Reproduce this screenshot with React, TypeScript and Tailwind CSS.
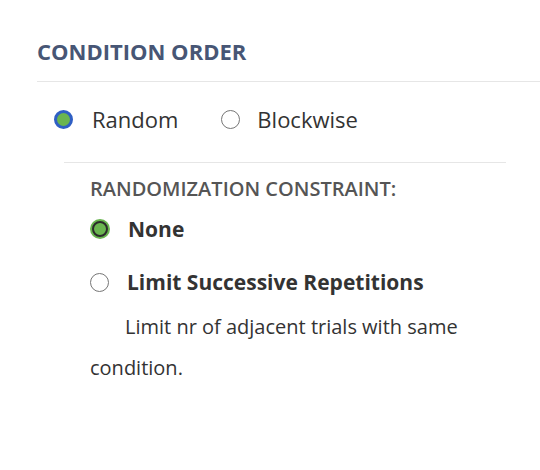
import { useState } from "react";

type Order = "random" | "blockwise";
type Constraint = "none" | "limit";

function Dot({ checked, variant }: { checked: boolean; variant: "blue" | "green" }) {
  if (!checked) {
    return <span className="block h-[19px] w-[19px] shrink-0 rounded-full border-[1.5px] border-[#767676] bg-white" />;
  }
  if (variant === "blue") {
    return <span className="block h-[19px] w-[19px] shrink-0 rounded-full border-[3px] border-[#2f5fc4] bg-[#6ab550]" />;
  }
  return (
    <span className="flex h-[20px] w-[20px] shrink-0 items-center justify-center rounded-full bg-[#6ab550]">
      <span className="block h-[16px] w-[16px] rounded-full border-[2.5px] border-[#2b2b2b] bg-[#6ab550]" />
    </span>
  );
}

export default function App() {
  const [order, setOrder] = useState<Order>("random");
  const [constraint, setConstraint] = useState<Constraint>("none");

  return (
    <div className="min-h-[470px] bg-white pl-[37px] pt-[36px] text-[#333]" style={{ fontFamily: '"Open Sans", "Noto Sans", sans-serif' }}>
      <h2 className="border-b border-[#e6e6e6] pb-[15px] text-[22px] font-bold leading-[30px] text-[#475675]">
        CONDITION ORDER
      </h2>

      <div className="flex items-center gap-[43px] pl-[17px] pt-[22px] text-[22px] leading-[30px]">
        <label className="flex cursor-pointer items-center gap-[19px]" onClick={() => setOrder("random")}>
          <Dot checked={order === "random"} variant="blue" />
          <span>Random</span>
        </label>
        <label className="flex cursor-pointer items-center gap-[17px]" onClick={() => setOrder("blockwise")}>
          <Dot checked={order === "blockwise"} variant="blue" />
          <span>Blockwise</span>
        </label>
      </div>

      <div className="ml-[27px] mr-[34px] mt-[28px] border-t border-[#e6e6e6] pl-[26px] pt-[13px]">
        <div className="text-[20px] font-semibold leading-[26px] text-[#555]">RANDOMIZATION CONSTRAINT:</div>

        <label className="mt-[13px] flex cursor-pointer items-center gap-[18px] text-[21px] font-bold leading-[28px]" onClick={() => setConstraint("none")}>
          <Dot checked={constraint === "none"} variant="green" />
          <span>None</span>
        </label>

        <label className="mt-[25px] flex cursor-pointer items-center gap-[18px] text-[21px] font-bold leading-[28px]" onClick={() => setConstraint("limit")}>
          <Dot checked={constraint === "limit"} variant="green" />
          <span>Limit Successive Repetitions</span>
        </label>

        <p className="mt-[10px] pr-[20px] indent-[35px] text-[20px] leading-[41px] text-[#333]">
          Limit nr of adjacent trials with same condition.
        </p>
      </div>
    </div>
  );
}
